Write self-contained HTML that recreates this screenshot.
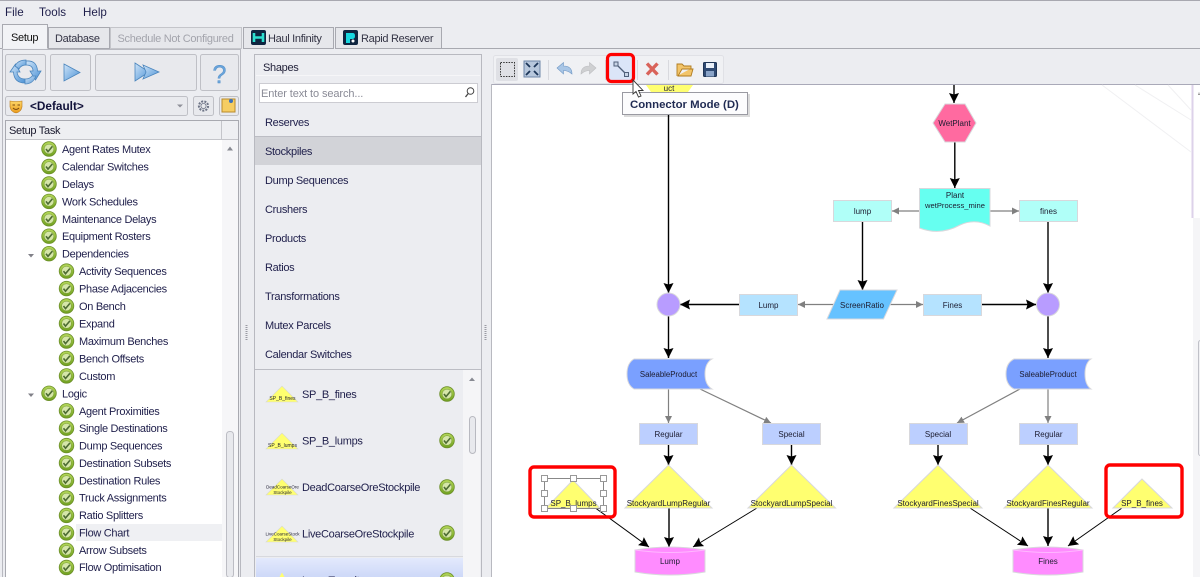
<!DOCTYPE html>
<html><head><meta charset="utf-8"><style>
html,body{margin:0;padding:0;width:1200px;height:577px;overflow:hidden;background:#ecedf1}
svg{display:block;filter:blur(.3px)}
text{font-family:"Liberation Sans",sans-serif}
.u{font-size:11px;letter-spacing:-.3px;fill:#1e1e4a}
.s{font-size:11px;letter-spacing:-.3px;fill:#333344}
.f{font-size:8px;fill:#1c1c30;text-anchor:middle}
.k{stroke:#000;stroke-width:1.4;fill:none;marker-end:url(#ab)}
.d{stroke:#000;stroke-width:1;fill:none;marker-end:url(#ab)}
.g{stroke:#808080;stroke-width:1.2;fill:none;marker-end:url(#ag)}
.b{stroke:#d8d8dc;stroke-width:1}
.h{fill:#fff;stroke:#999;stroke-width:1}
.btn{fill:#e8e9ed;stroke:#bfc0c6;stroke-width:1}
</style></head><body>
<svg width="1200" height="577" viewBox="0 0 1200 577" xmlns="http://www.w3.org/2000/svg">
<defs>
<marker id="ab" markerUnits="userSpaceOnUse" markerWidth="12" markerHeight="12" refX="10" refY="5" orient="auto"><path d="M0 0L10 5L0 10L1.5 5z" fill="#000"/></marker>
<marker id="ag" markerUnits="userSpaceOnUse" markerWidth="8" markerHeight="8" refX="7" refY="3.5" orient="auto"><path d="M0 0L7 3.5L0 7z" fill="#808080"/></marker>
<linearGradient id="chk" x1="0" y1="0" x2="0" y2="1"><stop offset="0" stop-color="#b5d85a"/><stop offset="1" stop-color="#6fa01e"/></linearGradient>
<linearGradient id="bg1" x1="0" y1="0" x2="0" y2="1"><stop offset="0" stop-color="#f0f1f4"/><stop offset="1" stop-color="#e4e5ea"/></linearGradient>
<linearGradient id="blu" x1="0" y1="0" x2="1" y2="1"><stop offset="0" stop-color="#cfe4f8"/><stop offset="1" stop-color="#4d93d6"/></linearGradient>
<linearGradient id="sel" x1="0" y1="0" x2="0" y2="1"><stop offset="0" stop-color="#e3e9fc"/><stop offset="1" stop-color="#cdd8f8"/></linearGradient>
<linearGradient id="mask" x1="0" y1="0" x2="0" y2="1"><stop offset="0" stop-color="#ffd86a"/><stop offset="1" stop-color="#e99a1c"/></linearGradient>
<g id="c"><circle r="7.3" fill="url(#chk)" stroke="#6c8f2a" stroke-width=".8"/><circle r="4.8" fill="#d5e6a8" stroke="#7a9c3a" stroke-width=".5"/><path d="M-3 0L-1 2.6L3.4-2.6" fill="none" stroke="#4d6b33" stroke-width="1.6"/></g>
<g id="tri"><path d="M-16 8L0-8L16 8z" fill="#ffff70" stroke="#d8d8d0" stroke-width=".6"/></g>
</defs>

<rect width="1200" height="577" fill="#ecedf1"/>
<rect width="1200" height="1" fill="#a8a8b0"/>
<text x="5" y="16" style="font-size:11.6px;fill:#1e1e4a">File</text>
<text x="39" y="16" style="font-size:11.6px;fill:#1e1e4a">Tools</text>
<text x="83" y="16" style="font-size:11.6px;fill:#1e1e4a">Help</text>

<!-- tabs -->
<path d="M0 48.500H2.500" stroke="#a8a9b0"/>
<rect x="48.500" y="27.500" width="61" height="21" fill="#e6e7eb" stroke="#a8a9b0"/>
<rect x="110.500" y="27.500" width="131" height="21" fill="#e6e7eb" stroke="#c4c5ca"/>
<rect x="243.500" y="27.500" width="90" height="21" fill="#e6e7eb" stroke="#a8a9b0"/>
<rect x="335.500" y="27.500" width="106" height="21" fill="#e6e7eb" stroke="#a8a9b0"/>
<path d="M441 48.500H1200" stroke="#a8a9b0"/>
<path d="M2.500 48.500V24.500H47.500V48.500" fill="#f2f3f6" stroke="#a8a9b0"/>
<text x="11" y="41" class="u" style="fill:#111">Setup</text>
<text x="55" y="42" class="s">Database</text>
<text x="117.500" y="42" class="s" style="fill:#a3a4ac">Schedule Not Configured</text>
<text x="268" y="42" class="s">Haul Infinity</text>
<text x="361" y="42" class="s">Rapid Reserver</text>
<rect x="251" y="30" width="15" height="15" rx="2" fill="#0f2540"/><path d="M254 33v9M263 33v9M254 37.500h9" stroke="#2ee0d0" stroke-width="2.600" fill="none"/>
<rect x="343" y="30" width="15" height="15" rx="2" fill="#0f2540"/><path d="M346 33h7q2 0 2 3t-3 3h-6z" fill="#18d8e0"/><path d="M346 39h4v4h-4z" fill="#18d8e0"/><circle cx="353" cy="41" r="1.500" fill="#fff"/>

<!-- left panel -->
<rect x="2.500" y="49.500" width="238" height="528" fill="#ecedf1" stroke="#b8b9c0"/>
<rect x="5.500" y="54.500" width="40" height="36" rx="2" class="btn"/>
<rect x="50.500" y="54.500" width="40" height="36" rx="2" class="btn"/>
<rect x="95.500" y="54.500" width="101" height="36" rx="2" class="btn"/>
<rect x="200.500" y="54.500" width="38" height="36" rx="2" class="btn"/>
<g fill="url(#blu)" stroke="#4a85bd" stroke-width=".8">
<path d="M10 72L15.500 64L20 72H17Q18 79 25 79V83Q14 83 13.500 72z"/>
<path d="M41 71L35.500 80L30 71H33Q33 65 26 65V61Q37 60 37.500 71z"/>
<path d="M15 66Q18 60 26 60V65Q21 65 19 69z"/>
<path d="M36 76Q33 84 25 84V79Q30 79 32 76z" opacity=".9"/>
<path d="M64 64L80 72.500L64 81z"/>
<path d="M135 63L149 72L135 81z"/><path d="M143 65L159 72L143 79L146 72z"/>
</g>
<text x="219.500" y="83" text-anchor="middle" style="font-size:25px;fill:#6aa4da;stroke:#4f8dc8;stroke-width:.4">?</text>
<rect x="5.500" y="96.500" width="182" height="19" rx="2" fill="#e9eaee" stroke="#bfc0c6"/>
<path d="M10 101Q16 102 22 101V107Q21 112 16 113Q11 112 10 107z" fill="url(#mask)" stroke="#b8781c" stroke-width=".6"/><path d="M12.500 105h2.500M17.500 105h2.500M13 108Q16 111 19 108" stroke="#7a4a10" stroke-width="1" fill="none"/>
<text x="30" y="110" style="font-weight:bold;fill:#12123a;font-size:11.800px">&lt;Default&gt;</text>
<path d="M177 104.500h6l-3 3z" fill="#90919a"/>
<rect x="193.500" y="96.500" width="20" height="19" rx="2" class="btn"/>
<rect x="219.500" y="96.500" width="19" height="19" rx="2" class="btn"/>
<circle cx="203.500" cy="106" r="4.600" fill="none" stroke="#6d7486" stroke-width="2" stroke-dasharray="2 1.200"/><circle cx="203.500" cy="106" r="2.600" fill="#e8e9ed" stroke="#6d7486" stroke-width=".8"/>
<rect x="222" y="99" width="13" height="13" fill="#f6cd62" stroke="#b98a2c"/><circle cx="231" cy="101" r="2" fill="#3d72b8"/>

<rect x="5.500" y="120.500" width="233" height="457" fill="#fff" stroke="#a8a9b0"/>
<rect x="6" y="121" width="232" height="18" fill="#eeeff2"/>
<path d="M6 139.500H238M221.500 121V139" stroke="#c4c5ca"/>
<text x="9" y="134" class="u" style="fill:#1a1a2e">Setup Task</text>
<rect x="222" y="140" width="16" height="437" fill="#f6f6f8"/>
<path d="M227 150.500h6l-3-4z" fill="#888a92"/>
<rect x="226.500" y="431.500" width="7" height="146" rx="3" fill="#e8e9ed" stroke="#bcbdc4"/>
<rect x="76" y="524" width="146" height="17" fill="#eff0f3"/>
<path d="M28 254h6l-3 3.500z M28 393.500h6l-3 3.500z" fill="#808088"/>

<use href="#c" x="49" y="149"/><text x="62" y="153" class="u">Agent Rates Mutex</text>
<use href="#c" x="49" y="166.500"/><text x="62" y="170.500" class="u">Calendar Switches</text>
<use href="#c" x="49" y="184"/><text x="62" y="188" class="u">Delays</text>
<use href="#c" x="49" y="201.400"/><text x="62" y="205.400" class="u">Work Schedules</text>
<use href="#c" x="49" y="218.800"/><text x="62" y="222.800" class="u">Maintenance Delays</text>
<use href="#c" x="49" y="236.200"/><text x="62" y="240.200" class="u">Equipment Rosters</text>
<use href="#c" x="49" y="253.700"/><text x="62" y="257.700" class="u">Dependencies</text>
<use href="#c" x="66.500" y="271.100"/><text x="79" y="275.100" class="u">Activity Sequences</text>
<use href="#c" x="66.500" y="288.600"/><text x="79" y="292.600" class="u">Phase Adjacencies</text>
<use href="#c" x="66.500" y="306"/><text x="79" y="310" class="u">On Bench</text>
<use href="#c" x="66.500" y="323.500"/><text x="79" y="327.500" class="u">Expand</text>
<use href="#c" x="66.500" y="341"/><text x="79" y="345" class="u">Maximum Benches</text>
<use href="#c" x="66.500" y="358.400"/><text x="79" y="362.400" class="u">Bench Offsets</text>
<use href="#c" x="66.500" y="375.900"/><text x="79" y="379.900" class="u">Custom</text>
<use href="#c" x="49" y="393.300"/><text x="62" y="397.300" class="u">Logic</text>
<use href="#c" x="66.500" y="410.800"/><text x="79" y="414.800" class="u">Agent Proximities</text>
<use href="#c" x="66.500" y="428.200"/><text x="79" y="432.200" class="u">Single Destinations</text>
<use href="#c" x="66.500" y="445.600"/><text x="79" y="449.600" class="u">Dump Sequences</text>
<use href="#c" x="66.500" y="463"/><text x="79" y="467" class="u">Destination Subsets</text>
<use href="#c" x="66.500" y="480.500"/><text x="79" y="484.500" class="u">Destination Rules</text>
<use href="#c" x="66.500" y="498"/><text x="79" y="501.700" class="u">Truck Assignments</text>
<use href="#c" x="66.500" y="515.400"/><text x="79" y="519" class="u">Ratio Splitters</text>
<use href="#c" x="66.500" y="532.900"/><text x="79" y="536.500" class="u">Flow Chart</text>
<use href="#c" x="66.500" y="550.300"/><text x="79" y="553.800" class="u">Arrow Subsets</text>
<use href="#c" x="66.500" y="567.500"/><text x="79" y="571" class="u">Flow Optimisation</text>

<!-- splitters -->
<path d="M246.500 325v15M485.500 325v15" stroke="#9a9ba4" stroke-width="2" stroke-dasharray="1 1"/>

<!-- shapes panel -->
<rect x="254.500" y="54.500" width="227" height="523" fill="#ecedf1" stroke="#b8b9c0"/>
<text x="263" y="71" class="s" style="fill:#22223a">Shapes</text>
<path d="M256 75.500H480" stroke="#f6f6f8"/>
<rect x="259.500" y="83.500" width="218" height="19" fill="#fff" stroke="#ccccd2"/>
<text x="261" y="97" class="s" style="fill:#8a8b96;letter-spacing:-.1px">Enter text to search...</text>
<circle cx="470.500" cy="91" r="3.300" fill="none" stroke="#444"/><path d="M468.200 93.500L465.500 97" stroke="#444" stroke-width="1.300"/>
<text x="265" y="126" class="u">Reserves</text>
<rect x="255" y="137" width="226" height="28" fill="#d2d3d8"/><path d="M255 136.500H481" stroke="#bcbdc4"/>
<text x="265" y="155" class="u">Stockpiles</text>
<text x="265" y="184" class="u">Dump Sequences</text>
<text x="265" y="213" class="u">Crushers</text>
<text x="265" y="242" class="u">Products</text>
<text x="265" y="271" class="u">Ratios</text>
<text x="265" y="300" class="u">Transformations</text>
<text x="265" y="329" class="u">Mutex Parcels</text>
<text x="265" y="358" class="u">Calendar Switches</text>
<path d="M255 369.500H481" stroke="#bcbdc4"/>
<rect x="463" y="370" width="17" height="207" fill="#f5f5f7"/>
<path d="M469 381h6l-3-3.500z" fill="#888a92"/>
<rect x="469.500" y="416.500" width="6" height="37" rx="3" fill="#e8e9ed" stroke="#b8b9c0"/>
<rect x="256" y="558" width="207" height="19" fill="url(#sel)"/>
<path d="M256 556.500H463" stroke="#d8d9de"/>
<use href="#tri" x="282" y="394"/><text x="282.500" y="400" class="f" style="font-size:5px">SP_B_fines</text>
<use href="#tri" x="282" y="441"/><text x="282.500" y="447" class="f" style="font-size:5px">SP_B_lumps</text>
<use href="#tri" x="282" y="487"/><text x="282.500" y="488.500" class="f" style="font-size:4.500px">DeadCoarseOre</text><text x="282.500" y="494" class="f" style="font-size:4.500px">Stockpile</text>
<use href="#tri" x="282" y="534"/><text x="282.500" y="535.500" class="f" style="font-size:4.500px">LiveCoarseStock</text><text x="282.500" y="541" class="f" style="font-size:4.500px">Stockpile</text>
<path d="M274 587L282 572.500L290 587z" fill="#ffff70"/>
<text x="302" y="398" class="u">SP_B_fines</text>
<text x="302" y="444.500" class="u">SP_B_lumps</text>
<text x="302" y="491" class="u">DeadCoarseOreStockpile</text>
<text x="302" y="537.500" class="u">LiveCoarseOreStockpile</text>
<text x="302" y="584" class="u">LumpTransit</text>
<use href="#c" x="447" y="394"/><use href="#c" x="447" y="440.500"/><use href="#c" x="447" y="487"/><use href="#c" x="447" y="533"/><use href="#c" x="447" y="580"/>

<!-- canvas -->
<rect x="491" y="84" width="709" height="493" fill="#fff"/>
<rect x="1193" y="218" width="7" height="359" fill="#f5f5f7"/>
<path d="M1192.500 85V218" stroke="#ddd2ea" stroke-width="2"/>
<path d="M491.500 84.500H1200" stroke="#a9a9b8"/><path d="M491.500 84V577" stroke="#b8b9c0"/>
<path d="M1102 85L1191 152M1135 85L1191 120M1168 85L1191 110" stroke="#f0f0f2"/>
<path d="M1198 94.500h2M1199 92.500v2" stroke="#999"/>
<rect x="1198.500" y="340.500" width="4" height="115" rx="2" fill="#f0f0f3" stroke="#c0c1c8"/>

<!-- toolbar -->
<rect x="493.500" y="55.500" width="230" height="28" rx="2" fill="#f0f1f4" stroke="#e0e1e6"/>
<rect x="496" y="58" width="22" height="23" rx="2" fill="#dfe0e5"/>
<rect x="500.500" y="62.500" width="14" height="14" fill="none" stroke="#333" stroke-dasharray="1.500 1.200"/>
<rect x="524" y="61" width="16" height="16" fill="#b7c7dc" stroke="#6e86a8"/>
<path d="M526 63l4 4M538 63l-4 4M526 75l4-4M538 75l-4-4" stroke="#1c3558" stroke-width="1.800"/>
<path d="M548.500 60V80M605.500 60V80M637.500 60V80M668.500 60V80" stroke="#d8d9de"/>
<path d="M557 68L563.500 62.500V66Q572 66 572 74Q568 70.500 563.500 70.500V74z" fill="#a9c6e6" stroke="#6f97c4" stroke-width=".6"/>
<path d="M596 68L589.500 62.500V66Q581 66 581 74Q585 70.500 589.500 70.500V74z" fill="#cfd0d2" stroke="#bcbdc0" stroke-width=".6"/>
<rect x="608" y="55" width="25" height="26" fill="#dbe5f8"/>
<path d="M616 64L626 74" stroke="#50607a" stroke-width="1.300"/><rect x="614" y="62" width="4" height="4" fill="#c8d4e6" stroke="#50607a"/><rect x="624.500" y="72.500" width="4" height="4" fill="#c8d4e6" stroke="#50607a"/>
<rect x="607.500" y="54.500" width="26" height="27" rx="4" fill="none" stroke="#f00" stroke-width="3.200"/>
<path d="M647 63.500L657.500 74.500M657.500 63.500L647 74.500" stroke="#d9635a" stroke-width="3.400"/>
<path d="M677 76V64h5l2 2h7v3h-9l-4 7h13l2-7h-3" fill="#f3c56a" stroke="#b07c20" stroke-width=".9"/>
<rect x="703.500" y="62.500" width="13" height="14" rx="1" fill="#2f4a72" stroke="#1f3555"/><rect x="706" y="63" width="8" height="5" fill="#eaf0f8"/><rect x="706" y="71" width="8" height="5.500" fill="#8aa4c8"/>

<!-- partial top shape -->
<path d="M646 85H693L688 92H651z" fill="#ffff70"/>
<text x="669" y="91" class="f">uct</text>

<!-- connectors -->
<path d="M668.500 92V293" class="k"/>
<path d="M954 85V103" class="k"/>
<path d="M954.800 142V188" class="k"/>
<path d="M862.500 221V290" class="k"/>
<path d="M1048 221V293" class="k"/>
<path d="M739 304.500H680" class="k"/>
<path d="M982 304.500H1036" class="k"/>
<path d="M668.500 316V358" class="k"/>
<path d="M1048 316V358" class="k"/>
<path d="M668.500 444V465" class="k"/>
<path d="M791.500 444V465" class="k"/>
<path d="M938 444V465" class="k"/>
<path d="M1048 444V465" class="k"/>
<path d="M594 507L649 547" class="d"/>
<path d="M669 508V547" class="k"/>
<path d="M757 508L693 547" class="d"/>
<path d="M970 508L1028 546" class="d"/>
<path d="M1048 508V546" class="k"/>
<path d="M1122 508L1068 546" class="d"/>
<path d="M919 211H892" class="g"/>
<path d="M990 211H1019" class="g"/>
<path d="M834 304.500H798" class="g"/>
<path d="M890 304.500H923" class="g"/>
<path d="M668.500 389V423" class="g"/>
<path d="M700 389L771 423" class="g"/>
<path d="M1020 389L957 423" class="g"/>
<path d="M1048 389V423" class="g"/>

<!-- shapes -->
<path d="M933 123L945 104H965L976 123L965 142H945z" fill="#ff6aa0" class="b"/>
<text x="954.500" y="126" class="f">WetPlant</text>
<path d="M919.500 188.500H990V226Q975 218 960 225Q940 236 919.500 228z" fill="#66fff0" class="b"/>
<text x="955" y="198" class="f">Plant</text><text x="955" y="208" class="f" style="font-size:7.600px">wetProcess_mine</text>
<rect x="833.500" y="200.500" width="58" height="21" fill="#b0fff8" class="b"/><text x="862.500" y="214" class="f">lump</text>
<rect x="1019.500" y="200.500" width="58" height="21" fill="#b0fff8" class="b"/><text x="1048.500" y="214" class="f">fines</text>
<path d="M840 290H897L883.500 319H827z" fill="#66c2ff" class="b"/><text x="862" y="308" class="f">ScreenRatio</text>
<circle cx="668.500" cy="304.500" r="11.500" fill="#b89cff" class="b"/>
<circle cx="1048" cy="304.500" r="11.500" fill="#b89cff" class="b"/>
<rect x="739.500" y="294.500" width="58" height="21" fill="#b5e3ff" class="b"/><text x="768.500" y="308" class="f">Lump</text>
<rect x="923.500" y="294.500" width="58" height="21" fill="#b5e3ff" class="b"/><text x="952.500" y="308" class="f">Fines</text>
<path d="M634 359H712Q705 363 705 374Q705 385 712 389H634Q627 385 627 374Q627 363 634 359z" fill="#7aa0ff" class="b"/><text x="668.500" y="377" class="f" style="font-size:7.800px">SaleableProduct</text>
<path d="M1014 359H1091Q1085 363 1085 374Q1085 385 1091 389H1014Q1006 385 1006 374Q1006 363 1014 359z" fill="#7aa0ff" class="b"/><text x="1048" y="377" class="f" style="font-size:7.800px">SaleableProduct</text>
<rect x="639.500" y="423.500" width="58" height="21" fill="#bccfff" class="b"/><text x="668.500" y="437" class="f">Regular</text>
<rect x="762.500" y="423.500" width="58" height="21" fill="#bccfff" class="b"/><text x="791.500" y="437" class="f">Special</text>
<rect x="909.500" y="423.500" width="58" height="21" fill="#bccfff" class="b"/><text x="938" y="437" class="f">Special</text>
<rect x="1019.500" y="423.500" width="58" height="21" fill="#bccfff" class="b"/><text x="1048.500" y="437" class="f">Regular</text>
<path d="M668.500 465L712 508H625z" fill="#ffff70" class="b"/><text x="668.500" y="506" class="f">StockyardLumpRegular</text>
<path d="M791.500 465L835.500 508H748z" fill="#ffff70" class="b"/><text x="791.500" y="506" class="f">StockyardLumpSpecial</text>
<path d="M938 465L982 508H894z" fill="#ffff70" class="b"/><text x="938" y="506" class="f">StockyardFinesSpecial</text>
<path d="M1048 465L1092 508H1004z" fill="#ffff70" class="b"/><text x="1048" y="506" class="f">StockyardFinesRegular</text>
<path d="M1142 479L1172 508H1113z" fill="#ffff70" class="b"/><text x="1142" y="506" class="f">SP_B_fines</text>
<path d="M573 480L600 508H546z" fill="#ffff70" class="b"/><text x="573.500" y="506" class="f">SP_B_lumps</text>
<path d="M635 550Q670 544 705 550V572Q670 578 635 572z" fill="#ff8cff" class="b"/><path d="M635 550Q670 555 705 550" fill="none" stroke="#ffb8ff"/><text x="670" y="564" class="f">Lump</text>
<path d="M1013 550Q1048 544 1083 550V572Q1048 578 1013 572z" fill="#ff8cff" class="b"/><path d="M1013 550Q1048 555 1083 550" fill="none" stroke="#ffb8ff"/><text x="1048" y="564" class="f">Fines</text>

<!-- selection -->
<rect x="544.500" y="478.500" width="59" height="30" fill="none" stroke="#888"/>
<rect x="541.500" y="475.500" width="6" height="6" class="h"/><rect x="570.500" y="475.500" width="6" height="6" class="h"/><rect x="600.500" y="475.500" width="6" height="6" class="h"/>
<rect x="541.500" y="490.500" width="6" height="6" class="h"/><rect x="600.500" y="490.500" width="6" height="6" class="h"/>
<rect x="541.500" y="505.500" width="6" height="6" class="h"/><rect x="570.500" y="505.500" width="6" height="6" class="h"/><rect x="600.500" y="505.500" width="6" height="6" class="h"/>

<!-- red boxes -->
<rect x="530" y="467" width="85" height="50" rx="4" fill="none" stroke="#f00" stroke-width="3.400"/>
<rect x="1106" y="465" width="76" height="52" rx="4" fill="none" stroke="#f00" stroke-width="3.400"/>

<!-- tooltip -->
<rect x="624" y="94" width="126" height="23" fill="#000" opacity=".14"/>
<rect x="622.500" y="92.500" width="125" height="22" fill="#fcfcfd" stroke="#9a9aa2"/>
<text x="630" y="108" style="font-weight:bold;font-size:11.400px;fill:#1f2a52">Connector Mode (D)</text>
<path d="M633 80V94L636 91.500L638.500 97L641 96L638.500 90.500H643z" fill="#fff" stroke="#333" stroke-width=".9"/>
</svg>
</body></html>
